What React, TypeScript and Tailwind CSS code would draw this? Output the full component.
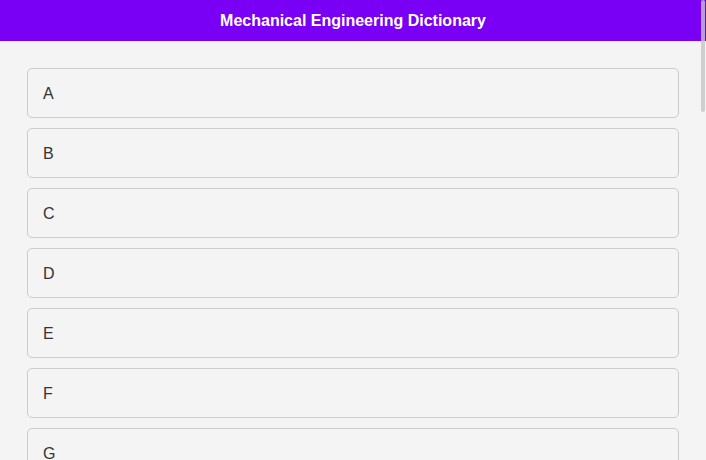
import React from 'react';

const letters = 'ABCDEFGHIJKLMNOPQRSTUVWXYZ'.split('');

const App: React.FC = () => {
  return (
    <div
      className="relative h-[460px] overflow-hidden bg-[#f4f4f4]"
      style={{ fontFamily: '"Liberation Sans", Arial, sans-serif' }}
    >
      {/* Header */}
      <div className="h-[41px] bg-[#7a00f5] flex items-center justify-center">
        <h1 className="text-white font-bold text-[16px]">Mechanical Engineering Dictionary</h1>
      </div>

      {/* Letter list */}
      <div className="px-[27px] pt-[27px] pb-[40px] flex flex-col gap-[10px]">
        {letters.map((l) => (
          <div
            key={l}
            className="h-[50px] flex items-center px-[15px] pt-[2px] border border-[#cccccc] rounded-[5px] bg-[#f4f4f4] text-[16px] text-[#333333] cursor-pointer"
          >
            {l}
          </div>
        ))}
      </div>

      {/* thin overlay scrollbar */}
      <div className="absolute top-0 right-[1px] w-[4px] h-[112px] rounded-[2px] bg-[#c6c6c6]/80" />
    </div>
  );
};

export default App;
